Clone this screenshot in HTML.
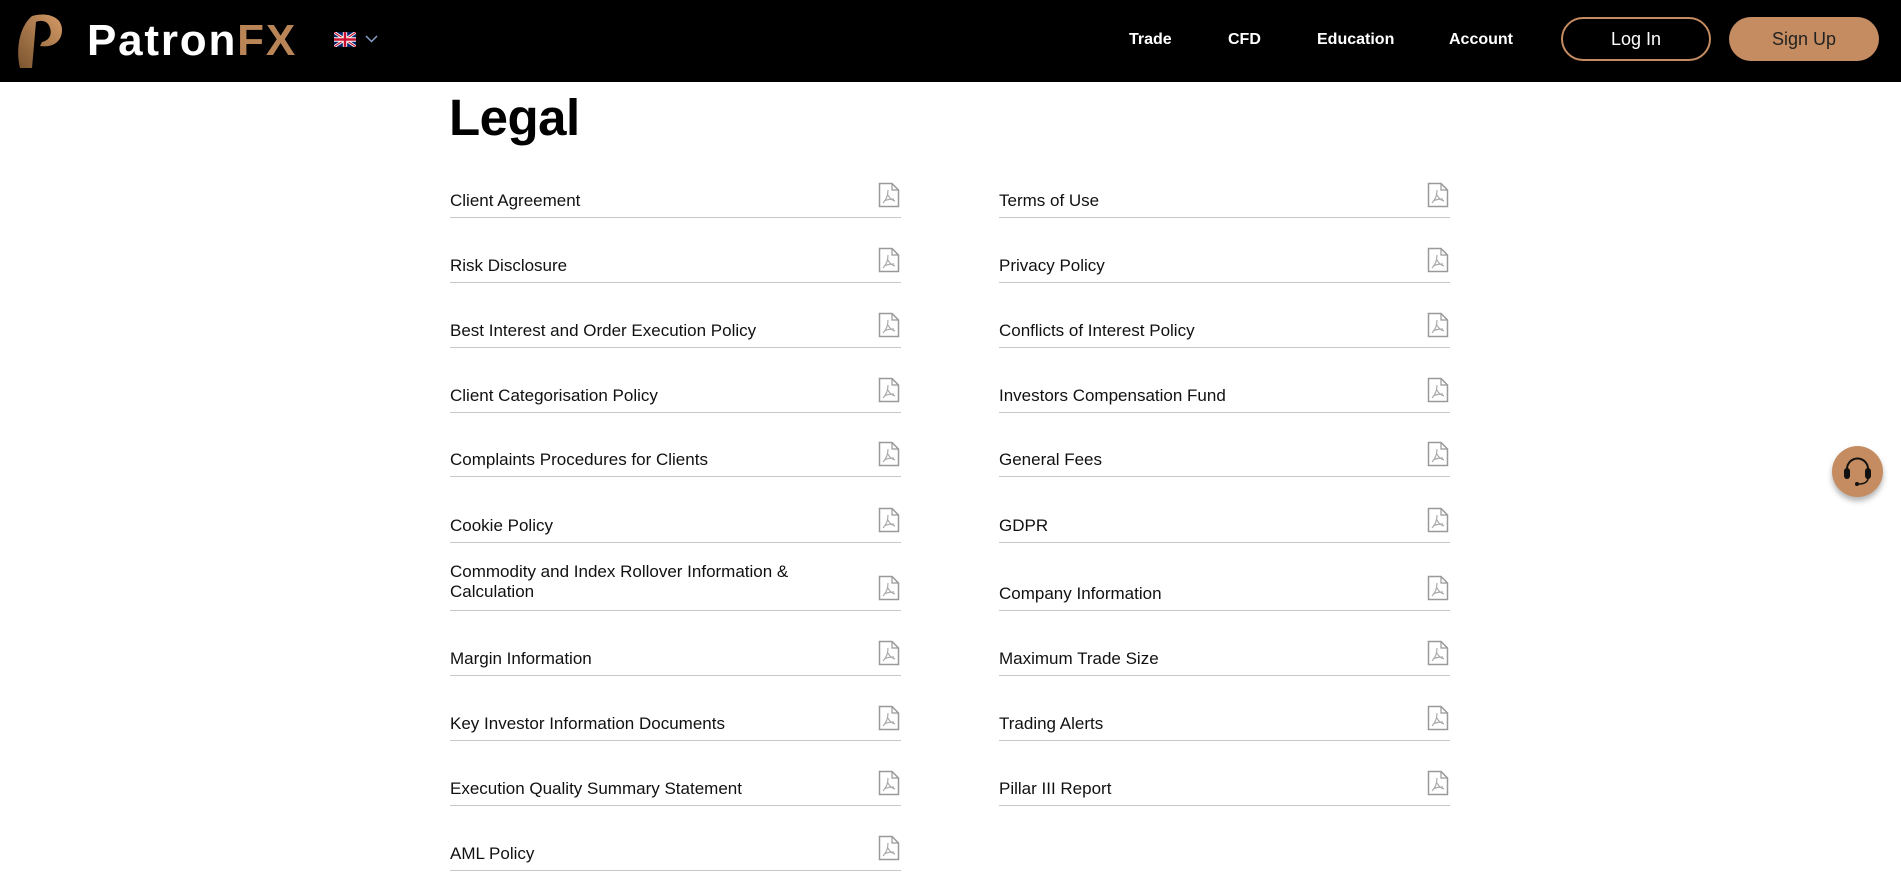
<!DOCTYPE html>
<html><head><meta charset="utf-8"><style>
*{margin:0;padding:0;box-sizing:border-box}
body{width:1901px;height:885px;overflow:hidden;background:#fff;font-family:"Liberation Sans",sans-serif;position:relative}
.hdr{position:absolute;left:0;top:0;width:1901px;height:82px;background:#000}
.logo{position:absolute;left:87px;top:16px;font-size:44px;font-weight:bold;color:#fff;letter-spacing:1.8px}
.logo span{color:#b98557}
.nav{position:absolute;top:31px;color:#fff;font-size:16px;font-weight:bold}
.btn{position:absolute;top:17px;height:44px;width:150px;border-radius:22px;font-size:18px;text-align:center;line-height:40px}
.row{position:absolute;width:451px;border-bottom:1px solid #c8c8c8;display:flex;align-items:flex-end;padding-bottom:6px;font-size:17px;line-height:20px;color:#111}
.row svg{position:absolute;right:1px;bottom:9px}
h1{position:absolute;left:449px;top:88px;font-size:51px;font-weight:bold;color:#000;letter-spacing:-0.5px}
</style></head><body>
<div class="hdr">
<svg style="position:absolute;left:12px;top:12px" width="52" height="58" viewBox="0 0 52 58"><defs><linearGradient id="g" x1="0" y1="1" x2="1" y2="0"><stop offset="0" stop-color="#7a5530"/><stop offset="1" stop-color="#d59a66"/></linearGradient></defs><path d="M20 4 C34 0 50 4 50 18 C50 30 40 36 28 34 L30 30 C38 28 40 22 38 16 C36 8 28 8 24 10 L20 56 L8 56 C4 40 6 16 20 4 Z" fill="url(#g)"/></svg>
<div class="logo">Patron<span>FX</span></div>
<svg style="position:absolute;left:334px;top:32px" width="22" height="15" viewBox="0 0 60 40"><rect width="60" height="40" fill="#012169"/><path d="M0 0L60 40M60 0L0 40" stroke="#fff" stroke-width="8"/><path d="M0 0L60 40M60 0L0 40" stroke="#C8102E" stroke-width="3"/><path d="M30 0V40M0 20H60" stroke="#fff" stroke-width="12"/><path d="M30 0V40M0 20H60" stroke="#C8102E" stroke-width="7"/></svg>
<svg style="position:absolute;left:365px;top:35px" width="13" height="8" viewBox="0 0 13 8"><path d="M1 1L6.5 6.5L12 1" stroke="#8aa0c8" stroke-width="1.5" fill="none"/></svg>
<div class="nav" style="left:1129px">Trade</div>
<div class="nav" style="left:1228px">CFD</div>
<div class="nav" style="left:1317px">Education</div>
<div class="nav" style="left:1449px">Account</div>
<div class="btn" style="left:1561px;border:2px solid #c48c60;color:#fff">Log In</div>
<div class="btn" style="left:1729px;background:#c48c60;color:#222;line-height:44px">Sign Up</div>
</div>
<h1>Legal</h1>
<svg width="0" height="0" style="position:absolute"><defs><g id="pdf"><path d="M1.5 1.5H14L20.5 8V24.5H1.5Z" fill="#fff" stroke="#999" stroke-width="1.5"/><path d="M14 1.5V8H20.5" fill="none" stroke="#999" stroke-width="1.2"/><path d="M10 8C10 13 9 17 5 21M10 13C12 17 14 18 17 19M6 19C10 17 13 17 16 17" fill="none" stroke="#aaa" stroke-width="1.2"/></g></defs></svg>

<div class="row" style="left:450px;top:152px;height:66px">Client Agreement<svg width="22" height="26"><use href="#pdf"/></svg></div>
<div class="row" style="left:450px;top:218px;height:65px">Risk Disclosure<svg width="22" height="26"><use href="#pdf"/></svg></div>
<div class="row" style="left:450px;top:283px;height:65px">Best Interest and Order Execution Policy<svg width="22" height="26"><use href="#pdf"/></svg></div>
<div class="row" style="left:450px;top:348px;height:65px">Client Categorisation Policy<svg width="22" height="26"><use href="#pdf"/></svg></div>
<div class="row" style="left:450px;top:413px;height:64px">Complaints Procedures for Clients<svg width="22" height="26"><use href="#pdf"/></svg></div>
<div class="row" style="left:450px;top:477px;height:66px">Cookie Policy<svg width="22" height="26"><use href="#pdf"/></svg></div>
<div class="row" style="left:450px;top:543px;height:68px;padding-bottom:8px">Commodity and Index Rollover Information &amp;<br>Calculation<svg width="22" height="26"><use href="#pdf"/></svg></div>
<div class="row" style="left:450px;top:611px;height:65px">Margin Information<svg width="22" height="26"><use href="#pdf"/></svg></div>
<div class="row" style="left:450px;top:676px;height:65px">Key Investor Information Documents<svg width="22" height="26"><use href="#pdf"/></svg></div>
<div class="row" style="left:450px;top:741px;height:65px">Execution Quality Summary Statement<svg width="22" height="26"><use href="#pdf"/></svg></div>
<div class="row" style="left:450px;top:806px;height:65px">AML Policy<svg width="22" height="26"><use href="#pdf"/></svg></div>

<div class="row" style="left:999px;top:152px;height:66px">Terms of Use<svg width="22" height="26"><use href="#pdf"/></svg></div>
<div class="row" style="left:999px;top:218px;height:65px">Privacy Policy<svg width="22" height="26"><use href="#pdf"/></svg></div>
<div class="row" style="left:999px;top:283px;height:65px">Conflicts of Interest Policy<svg width="22" height="26"><use href="#pdf"/></svg></div>
<div class="row" style="left:999px;top:348px;height:65px">Investors Compensation Fund<svg width="22" height="26"><use href="#pdf"/></svg></div>
<div class="row" style="left:999px;top:413px;height:64px">General Fees<svg width="22" height="26"><use href="#pdf"/></svg></div>
<div class="row" style="left:999px;top:477px;height:66px">GDPR<svg width="22" height="26"><use href="#pdf"/></svg></div>
<div class="row" style="left:999px;top:543px;height:68px">Company Information<svg width="22" height="26"><use href="#pdf"/></svg></div>
<div class="row" style="left:999px;top:611px;height:65px">Maximum Trade Size<svg width="22" height="26"><use href="#pdf"/></svg></div>
<div class="row" style="left:999px;top:676px;height:65px">Trading Alerts<svg width="22" height="26"><use href="#pdf"/></svg></div>
<div class="row" style="left:999px;top:741px;height:65px">Pillar III Report<svg width="22" height="26"><use href="#pdf"/></svg></div>

<div style="position:absolute;left:1832px;top:446px;width:51px;height:51px;border-radius:50%;background:#c48c60;box-shadow:0 4px 6px rgba(0,0,0,0.3)">
<svg width="51" height="51" viewBox="0 0 51 51"><path d="M15 27V23A10.5 10.5 0 0 1 36 23V27" fill="none" stroke="#111" stroke-width="2"/><rect x="12" y="22" width="6" height="11" rx="3" fill="#111"/><rect x="33" y="22" width="6" height="11" rx="3" fill="#111"/><path d="M36 32C36 36 32 38 27 38" fill="none" stroke="#111" stroke-width="1.5"/><circle cx="25" cy="38" r="2" fill="#111"/></svg>
</div>
</body></html>
